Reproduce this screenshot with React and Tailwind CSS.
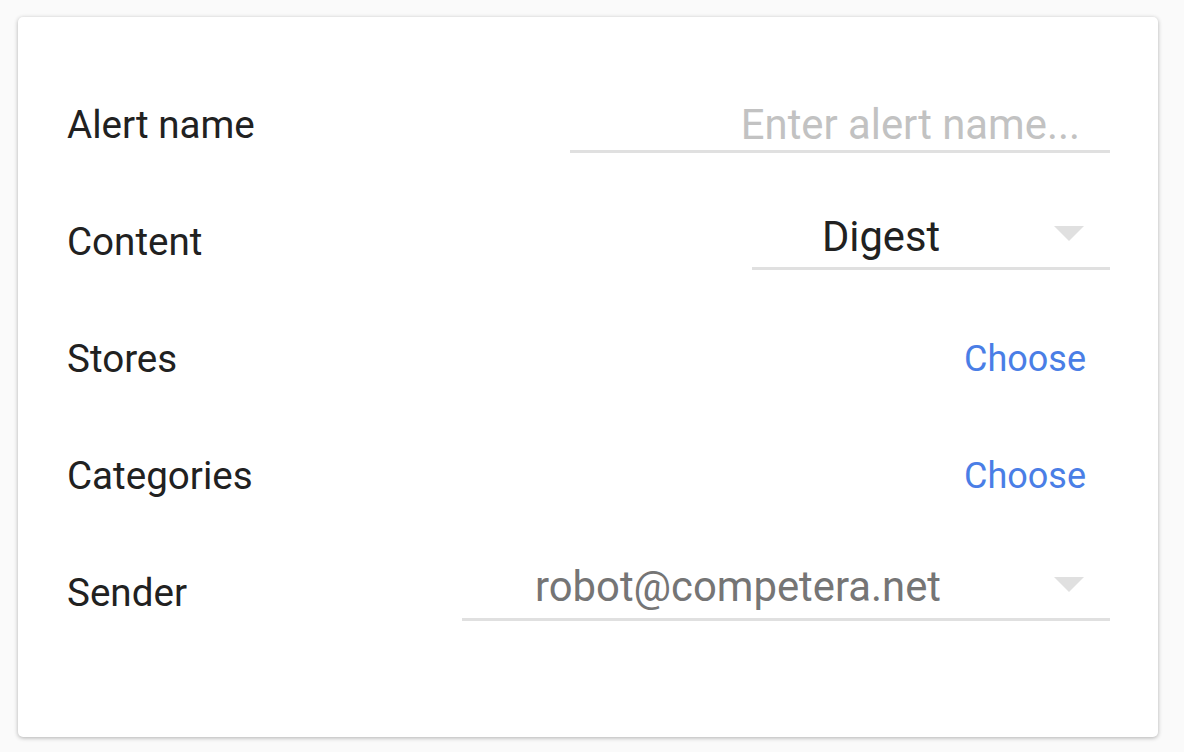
import React from "react";

function Arrow() {
  return (
    <svg width="30" height="15" viewBox="0 0 30 15" className="absolute right-[26px] top-[12px]">
      <polygon points="0,0 30,0 15,15" fill="#e0e0e0" />
    </svg>
  );
}

function Row({ label, children }) {
  return (
    <div className="flex h-[117px] items-center justify-between">
      <div className="text-[38.6px] text-[#212121]">{label}</div>
      {children}
    </div>
  );
}

export default function App() {
  return (
    <div className="min-h-[752px] w-[1184px] bg-[#fafafa] pt-[17px] pl-[18px]" style={{ fontFamily: "Roboto, 'Noto Sans', sans-serif" }}>
      <div className="w-[1140px] h-[720px] rounded-[5px] bg-white shadow-[0_1px_4px_rgba(0,0,0,0.3)] pl-[49px] pr-[48px] pt-[49px]">
        <Row label="Alert name">
          <div className="flex h-[56px] w-[540px] items-center justify-end border-b-[3px] border-[#e0e0e0] pr-[30px]">
            <input
              className="w-full translate-y-[2px] bg-transparent text-right text-[41.8px] text-[#212121] outline-none placeholder:text-[#c2c2c2]"
              placeholder="Enter alert name..."
            />
          </div>
        </Row>
        <Row label="Content">
          <div className="relative flex h-[56px] w-[358px] items-center justify-center border-b-[3px] border-[#e0e0e0] pr-[100px]">
            <span className="-translate-y-[3px] text-[41.7px] text-[#212121]">Digest</span>
            <Arrow />
          </div>
        </Row>
        <Row label="Stores">
          <span className="pr-[24px] text-[36px] text-[#4a7ee6]">Choose</span>
        </Row>
        <Row label="Categories">
          <span className="pr-[24px] text-[36px] text-[#4a7ee6]">Choose</span>
        </Row>
        <Row label="Sender">
          <div className="relative flex h-[56px] w-[648px] items-center justify-center border-b-[3px] border-[#e0e0e0] pr-[96px]">
            <span className="-translate-y-[4px] text-[41.8px] text-[#757575]">robot@competera.net</span>
            <Arrow />
          </div>
        </Row>
      </div>
    </div>
  );
}
